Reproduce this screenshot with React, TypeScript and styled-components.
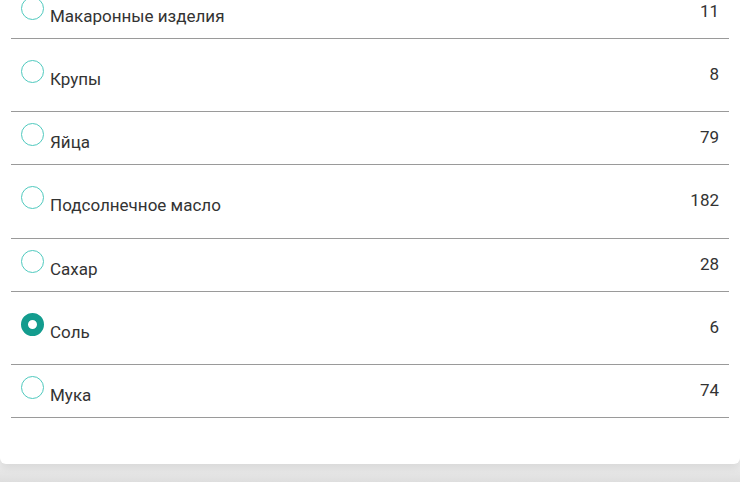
import React from "react";
import styled, { createGlobalStyle } from "styled-components";

const Global = createGlobalStyle`
  html, body {
    margin: 0;
    padding: 0;
    height: 100%;
    overflow: hidden;
  }
  body {
    background: linear-gradient(#f4f4f4 0px, #f4f4f4 455px, #dedede 482px);
    font-family: Roboto, "Noto Sans", Arial, sans-serif;
  }
`;

const Card = styled.div`
  background: #ffffff;
  border-radius: 0 0 6px 6px;
  box-shadow: 0 3px 8px rgba(0, 0, 0, 0.1);
  padding: 0 11px 46px;
  overflow: hidden;
`;

const List = styled.ul`
  list-style: none;
  margin: -14px 0 0;
  padding: 0;
`;

const Row = styled.li<{ $tall: boolean }>`
  display: flex;
  align-items: flex-start;
  padding: ${(p) => (p.$tall ? "21px 10px 22.3px" : "11px 10px 12px")};
  border-bottom: 1px solid #9a9a9a;
  color: #333333;
  font-size: 17px;
  line-height: 20px;
`;

const Radio = styled.span<{ $checked: boolean }>`
  flex: none;
  box-sizing: border-box;
  width: 23px;
  height: 23px;
  border-radius: 50%;
  border: ${(p) => (p.$checked ? "7px solid #139c8e" : "1.5px solid #4fc9be")};
`;

const Label = styled.span`
  flex: 1;
  margin: 9px 0 0 6px;
`;

const Count = styled.span`
  flex: none;
  margin-top: 4px;
  text-align: right;
`;

const items = [
  { name: "Макаронные изделия", count: 11 },
  { name: "Крупы", count: 8 },
  { name: "Яйца", count: 79 },
  { name: "Подсолнечное масло", count: 182 },
  { name: "Сахар", count: 28 },
  { name: "Соль", count: 6, checked: true },
  { name: "Мука", count: 74 },
];

export default function App() {
  return (
    <>
      <Global />
      <Card>
        <List>
          {items.map((it, i) => (
            <Row key={it.name} $tall={i % 2 === 1}>
              <Radio $checked={!!it.checked} />
              <Label>{it.name}</Label>
              <Count>{it.count}</Count>
            </Row>
          ))}
        </List>
      </Card>
    </>
  );
}
